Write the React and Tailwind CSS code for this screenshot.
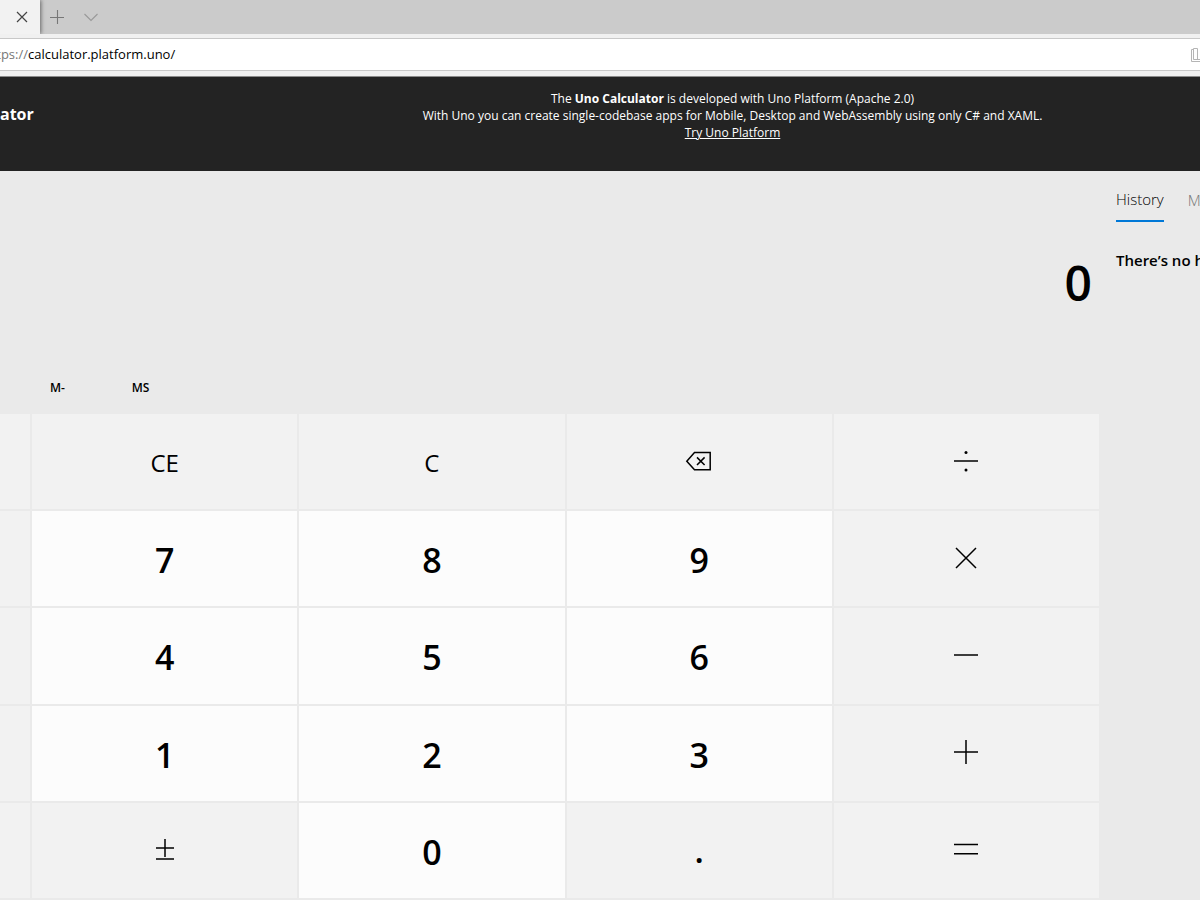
import React from "react";

const stroke = { fill: "none", stroke: "currentColor", strokeWidth: 1.5 };

function Icon({ name }) {
  const shapes = {
    backspace: (
      <>
        <path d="M9.5 5.5H25.2V22.8H9.5L1.8 14.2Z" />
        <path d="M12 10.4l7.6 7.6M19.6 10.4L12 18" />
      </>
    ),
    divide: (
      <>
        <path d="M2 14H26" />
        <circle cx="14" cy="5.5" r="1.5" fill="currentColor" stroke="none" />
        <circle cx="14" cy="23" r="1.5" fill="currentColor" stroke="none" />
      </>
    ),
    multiply: <path d="M4 4L24 24M24 4L4 24" />,
    minus: <path d="M2 14H26" />,
    plus: <path d="M2 14H26M14 2V26" />,
    equals: <path d="M2 9.5H26M2 18.8H26" />,
    sign: <path d="M5 13H23M14 4V22M5 24H23" />,
  };
  return (
    <svg className="size-7" viewBox="0 0 28 28" aria-hidden="true" {...stroke}>
      {shapes[name]}
    </svg>
  );
}

const keys = [
  { id: "percent", blank: true },
  { id: "CE", fn: true },
  { id: "C", fn: true },
  { id: "Backspace", icon: "backspace" },
  { id: "Divide", icon: "divide" },
  { id: "root", blank: true },
  { id: "7" },
  { id: "8" },
  { id: "9" },
  { id: "Multiply", icon: "multiply" },
  { id: "square", blank: true },
  { id: "4" },
  { id: "5" },
  { id: "6" },
  { id: "Minus", icon: "minus" },
  { id: "cube", blank: true },
  { id: "1" },
  { id: "2" },
  { id: "3" },
  { id: "Plus", icon: "plus" },
  { id: "inverse", blank: true },
  { id: "Sign", icon: "sign" },
  { id: "0" },
  { id: ".", dot: true },
  { id: "Equals", icon: "equals" },
];

function Key({ item }) {
  const base = "flex items-center justify-center ";
  if (item.blank) return <div className="bg-[#f2f2f2]" />;
  if (item.icon)
    return (
      <button type="button" aria-label={item.id} className={base + "bg-[#f2f2f2] pb-0.5"}>
        <Icon name={item.icon} />
      </button>
    );
  if (item.fn)
    return (
      <button type="button" className={base + "bg-[#f2f2f2] pt-0.5 text-2xl"}>
        {item.id}
      </button>
    );
  if (item.dot)
    return (
      <button type="button" className={base + "bg-[#f2f2f2] text-[34px] font-semibold"}>
        {item.id}
      </button>
    );
  return (
    <button type="button" className={base + "bg-[#fcfcfc] pt-1 text-[34px] font-semibold"}>
      {item.id}
    </button>
  );
}

export default function App() {
  return (
    <div className="flex min-h-screen flex-col overflow-hidden bg-[#eaeaea] font-['Open_Sans',sans-serif] text-black">
      <div className="flex h-[34px] bg-[#cbcbcb]">
        <div className="flex w-10 items-center justify-end bg-[#f2f2f2] pr-3 shadow-[1px_0_4px_rgba(0,0,0,0.5)]">
          <button type="button" aria-label="Close tab">
            <svg className="size-3" viewBox="0 0 12 12" fill="none" stroke="#444" strokeWidth="1.2">
              <path d="M1 1l10 10M11 1L1 11" />
            </svg>
          </button>
        </div>
        <button type="button" aria-label="New tab" className="ml-2.5">
          <svg className="size-3.5" viewBox="0 0 14 14" fill="none" stroke="#777" strokeWidth="1.1">
            <path d="M0 7.5h14M7.5 0v14" />
          </svg>
        </button>
        <button type="button" aria-label="Tab list" className="ml-5">
          <svg className="size-3.5" viewBox="0 0 14 14" fill="none" stroke="#999" strokeWidth="1.1">
            <path d="M0.5 4l6.5 6.5L13.5 4" />
          </svg>
        </button>
      </div>

      <div className="border-b border-[#8a8a8a] bg-[#f0f0f0] pt-1 pb-[5px]">
        <div className="flex h-[33px] items-center border-y border-[#c8c8c8] bg-white pt-px text-[13px]">
          <div className="flex w-7 justify-end overflow-hidden text-[#777]">
            <label htmlFor="address">tps://</label>
          </div>
          <input
            id="address"
            type="text"
            defaultValue="calculator.platform.uno/"
            className="min-w-0 flex-1 bg-transparent outline-none"
          />
          <svg className="h-4 w-2.5" viewBox="0 0 10 16" fill="none" stroke="#b5b5b5" strokeWidth="1">
            <path d="M3.5 2.5H1.5V14.5H10M3.5 12.5V1.5H7.500V12.5M3.5 12.5H10" />
          </svg>
        </div>
      </div>

      <header className="flex h-[94px] bg-[#232323] text-white">
        <h1 className="w-[265px] pt-[25px] text-base leading-6 font-bold">ator</h1>
        <div className="flex-1 pt-[13px] text-center text-[12px] leading-[17px]">
          <p>
            The <strong>Uno Calculator</strong> is developed with Uno Platform (Apache 2.0)
          </p>
          <p>
            With Uno you can create single-codebase apps for Mobile, Desktop and WebAssembly using only C# and XAML.
          </p>
          <a href="#uno" className="underline">
            Try Uno Platform
          </a>
        </div>
      </header>

      <main className="flex flex-1">
        <section className="flex min-w-0 flex-1 flex-col">
          <output className="block h-[191px] pt-20 pr-2 text-right text-5xl leading-[64px] font-semibold">0</output>
          <div className="flex h-[52px] pt-4 pl-4 text-xs font-semibold">
            <button type="button" className="h-5 w-[83px]">
              M-
            </button>
            <button type="button" className="h-5 w-[83px]">
              MS
            </button>
          </div>
          <div className="mr-px mb-0.5 grid flex-1 auto-rows-fr grid-cols-[30px_repeat(4,minmax(0,1fr))] gap-0.5">
            {keys.map((item) => (
              <Key key={item.id} item={item} />
            ))}
          </div>
        </section>
        <aside className="w-[100px] overflow-hidden pl-4 whitespace-nowrap">
          <div className="flex gap-6 pt-[15px] text-[15px] font-light">
            <button type="button" className="h-9 border-b-2 border-[#0078d7] pb-2">
              History
            </button>
            <button type="button" className="h-9 pb-2 text-[#777]">
              Memory
            </button>
          </div>
          <p className="pt-[26px] text-[15px] leading-6 font-semibold">There’s no history yet</p>
        </aside>
      </main>
    </div>
  );
}
